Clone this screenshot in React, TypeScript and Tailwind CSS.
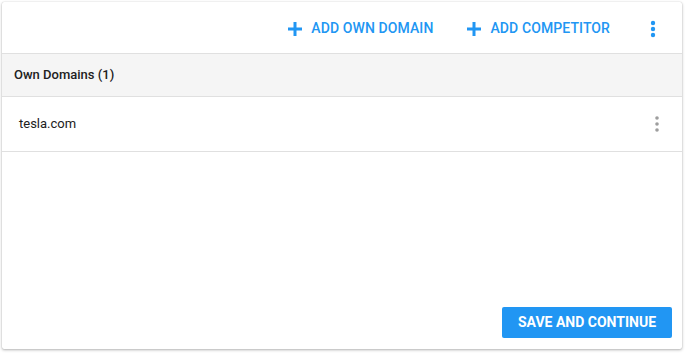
import React from "react";

const Plus = () => (
  <svg width="14" height="14" viewBox="0 0 14 14" className="shrink-0">
    <rect x="5.5" y="0" width="3" height="14" fill="#2196f3" />
    <rect x="0" y="5.5" width="14" height="3" fill="#2196f3" />
  </svg>
);

const Kebab = ({ color, r }: { color: string; r: number }) => (
  <svg width="8" height="18" viewBox="0 0 8 18">
    <circle cx="4" cy="3" r={r} fill={color} />
    <circle cx="4" cy="9" r={r} fill={color} />
    <circle cx="4" cy="15" r={r} fill={color} />
  </svg>
);

export default function App() {
  return (
    <div className="w-[686px] h-[353px] bg-white p-[2px] pr-[4px] pb-[4px]" style={{ fontFamily: "Roboto, 'Noto Sans', sans-serif" }}>
      <div className="w-[680px] h-[347px] bg-white rounded-[2px] shadow-[0_1px_3px_rgba(0,0,0,0.3),0_0_1px_rgba(0,0,0,0.2)] flex flex-col">
        <div className="h-[52px] pt-[2px] flex items-center justify-end border-b border-[#e0e0e0] pr-[25px] shrink-0">
          <div className="flex items-center gap-[9px] mr-[34px]">
            <Plus />
            <span className="text-[14px] font-medium text-[#2196f3] tracking-[0.1px]">ADD OWN DOMAIN</span>
          </div>
          <div className="flex items-center gap-[9px] mr-[39px]">
            <Plus />
            <span className="text-[14px] font-medium text-[#2196f3] tracking-[0.1px]">ADD COMPETITOR</span>
          </div>
          <Kebab color="#2196f3" r={2.2} />
        </div>
        <div className="h-[43px] bg-[#f5f5f5] flex items-center px-[12px] border-b border-[#e0e0e0] shrink-0">
          <span className="text-[13px] font-medium text-[#212121]">Own Domains (1)</span>
        </div>
        <div className="h-[55px] flex items-center justify-between pl-[17px] pr-[21px] border-b border-[#e0e0e0] shrink-0">
          <span className="text-[13px] text-[#212121]">tesla.com</span>
          <Kebab color="#9e9e9e" r={1.8} />
        </div>
        <div className="flex-1 flex items-end justify-end pr-[10px] pb-[11px]">
          <button className="h-[31px] w-[170px] bg-[#2196f3] text-white text-[14px] font-bold rounded-[2px] flex items-center justify-center">
            SAVE AND CONTINUE
          </button>
        </div>
      </div>
    </div>
  );
}
